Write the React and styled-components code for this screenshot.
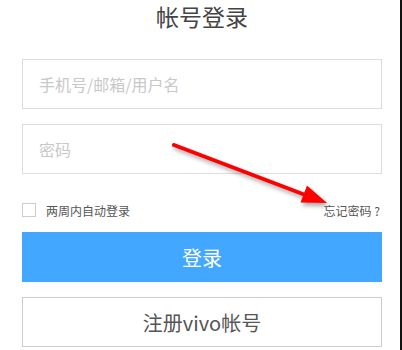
import React from "react";
import styled, { createGlobalStyle } from "styled-components";

const GlobalStyle = createGlobalStyle`
  body {
    margin: 0;
    background: #ffffff;
    font-family: "Noto Sans CJK SC", "Noto Sans", sans-serif;
  }
`;

const StyledPage = styled.div`
  position: relative;
  width: 400px;
  height: 350px;
  border-right: 2px solid #111;
  overflow: hidden;
`;

const StyledForm = styled.form`
  width: 360px;
  margin-left: 22px;
  display: flex;
  flex-direction: column;
`;

const StyledTitle = styled.h2`
  margin: 0 0 27px 0;
  height: 32px;
  line-height: 32px;
  font-size: 23px;
  font-weight: 400;
  color: #444;
  text-align: center;
`;

const StyledInput = styled.input`
  box-sizing: border-box;
  width: 100%;
  height: 50px;
  margin: 0 0 15px 0;
  padding: 0 16px;
  border: 1px solid #dddddd;
  outline: none;
  font-family: inherit;
  font-size: 16px;
  color: #333;
  &::placeholder {
    color: #c8c8c8;
  }
`;

const StyledOptionRow = styled.div`
  display: flex;
  align-items: center;
  justify-content: space-between;
  height: 24px;
  margin: 9px 0 10px 0;
  font-size: 12px;
  color: #555;
`;

const StyledRemember = styled.label`
  display: flex;
  align-items: center;
  gap: 10px;
`;

const StyledCheckBox = styled.span`
  box-sizing: border-box;
  width: 14px;
  height: 14px;
  border: 1px solid #cccccc;
  background: #fff;
`;

const StyledForgot = styled.a`
  color: #555;
  text-decoration: none;
  padding-right: 2px;
`;

const StyledButton = styled.button`
  box-sizing: border-box;
  width: 100%;
  height: 50px;
  margin-bottom: ${(props) => (props.primary ? "15px" : "0")};
  border: ${(props) => (props.primary ? "none" : "1px solid #cccccc")};
  background: ${(props) => (props.primary ? "#41a7ff" : "#ffffff")};
  color: ${(props) => (props.primary ? "#ffffff" : "#555555")};
  font-family: inherit;
  font-size: 20px;
  cursor: pointer;
`;

const StyledArrow = styled.svg`
  position: absolute;
  left: 0;
  top: 0;
  width: 400px;
  height: 350px;
  pointer-events: none;
  filter: drop-shadow(2px 3px 2px rgba(0, 0, 0, 0.35));
`;

const App = () => {
  return (
    <StyledPage>
      <GlobalStyle />
      <StyledForm onSubmit={(e) => e.preventDefault()}>
        <StyledTitle>帐号登录</StyledTitle>
        <StyledInput placeholder="手机号/邮箱/用户名" />
        <StyledInput type="password" placeholder="密码" />
        <StyledOptionRow>
          <StyledRemember>
            <StyledCheckBox />
            两周内自动登录
          </StyledRemember>
          <StyledForgot href="#">忘记密码 ?</StyledForgot>
        </StyledOptionRow>
        <StyledButton primary>登录</StyledButton>
        <StyledButton type="button">注册vivo帐号</StyledButton>
      </StyledForm>
      <StyledArrow viewBox="0 0 400 350">
        <line
          x1="174"
          y1="145"
          x2="308"
          y2="196"
          stroke="#ff0000"
          strokeWidth="4"
          strokeLinecap="round"
        />
        <polygon points="327,203 300.5,202.5 307,185.5" fill="#ff0000" />
      </StyledArrow>
    </StyledPage>
  );
};

export default App;
